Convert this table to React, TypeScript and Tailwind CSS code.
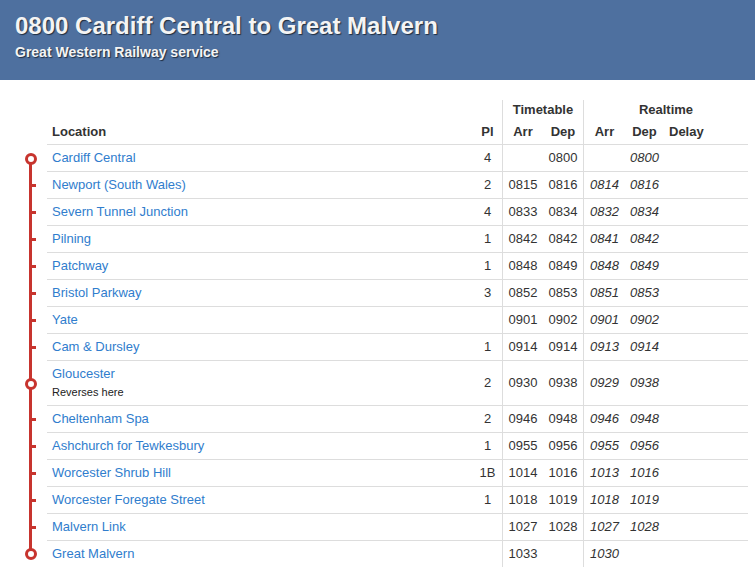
import React from 'react';

type Stop = {
  name: string;
  pl?: string;
  ttArr?: string;
  ttDep?: string;
  rtArr?: string;
  rtDep?: string;
  note?: string;
  major?: boolean;
};

const stops: Stop[] = [
  { name: 'Cardiff Central', pl: '4', ttDep: '0800', rtDep: '0800', major: true },
  { name: 'Newport (South Wales)', pl: '2', ttArr: '0815', ttDep: '0816', rtArr: '0814', rtDep: '0816' },
  { name: 'Severn Tunnel Junction', pl: '4', ttArr: '0833', ttDep: '0834', rtArr: '0832', rtDep: '0834' },
  { name: 'Pilning', pl: '1', ttArr: '0842', ttDep: '0842', rtArr: '0841', rtDep: '0842' },
  { name: 'Patchway', pl: '1', ttArr: '0848', ttDep: '0849', rtArr: '0848', rtDep: '0849' },
  { name: 'Bristol Parkway', pl: '3', ttArr: '0852', ttDep: '0853', rtArr: '0851', rtDep: '0853' },
  { name: 'Yate', ttArr: '0901', ttDep: '0902', rtArr: '0901', rtDep: '0902' },
  { name: 'Cam & Dursley', pl: '1', ttArr: '0914', ttDep: '0914', rtArr: '0913', rtDep: '0914' },
  { name: 'Gloucester', pl: '2', ttArr: '0930', ttDep: '0938', rtArr: '0929', rtDep: '0938', note: 'Reverses here', major: true },
  { name: 'Cheltenham Spa', pl: '2', ttArr: '0946', ttDep: '0948', rtArr: '0946', rtDep: '0948' },
  { name: 'Ashchurch for Tewkesbury', pl: '1', ttArr: '0955', ttDep: '0956', rtArr: '0955', rtDep: '0956' },
  { name: 'Worcester Shrub Hill', pl: '1B', ttArr: '1014', ttDep: '1016', rtArr: '1013', rtDep: '1016' },
  { name: 'Worcester Foregate Street', pl: '1', ttArr: '1018', ttDep: '1019', rtArr: '1018', rtDep: '1019' },
  { name: 'Malvern Link', ttArr: '1027', ttDep: '1028', rtArr: '1027', rtDep: '1028' },
  { name: 'Great Malvern', ttArr: '1033', rtArr: '1030', major: true },
];

const Route: React.FC<{ first: boolean; last: boolean; major?: boolean }> = ({ first, last, major }) => (
  <div className="relative w-[47px] shrink-0">
    <div
      className={`absolute left-[29px] w-[3px] bg-[#c7342e] ${first ? 'top-1/2' : 'top-0'} ${last ? 'bottom-1/2' : 'bottom-0'}`}
    />
    {major ? (
      <div className="absolute left-[24.5px] top-1/2 -mt-[6px] w-[12px] h-[12px] rounded-full border-[3px] border-[#c7342e] bg-white" />
    ) : (
      <div className="absolute left-[31px] top-1/2 -mt-[1.5px] w-[5px] h-[3px] bg-[#c7342e]" />
    )}
  </div>
);

export default function App() {
  return (
    <div className="w-[755px] min-h-[574px] bg-white font-['Liberation_Sans',Arial,sans-serif] text-[13px] text-[#333]">
      <div className="h-[80px] bg-[#4e709f] px-[15px] pt-[12px] text-[#f4f4f4] [text-shadow:1px_1px_1px_rgba(0,0,0,0.6)]">
        <h1 className="text-[24px] leading-[27px] font-bold">0800 Cardiff Central to Great Malvern</h1>
        <div className="mt-[5px] text-[14px] leading-[16px] font-bold">Great Western Railway service</div>
      </div>

      <div className="mt-[20px] w-[748px]">
        <div className="flex h-[20px] leading-[20px] font-bold">
          <div className="w-[502px] shrink-0" />
          <div className="w-[81px] shrink-0 border-l border-[#ddd] text-center">Timetable</div>
          <div className="flex-1 border-l border-[#ddd] text-center">Realtime</div>
        </div>
        <div className="flex">
          <div className="w-[47px] shrink-0" />
          <div className="flex flex-1 h-[25px] leading-[24px] font-bold border-b border-[#ddd]">
            <div className="w-[426px] shrink-0 pl-[5px]">Location</div>
            <div className="w-[29px] shrink-0 text-center">Pl</div>
            <div className="w-[41px] shrink-0 border-l border-[#ddd] text-center">Arr</div>
            <div className="w-[40px] shrink-0 text-center">Dep</div>
            <div className="w-[42px] shrink-0 border-l border-[#ddd] text-center">Arr</div>
            <div className="w-[39px] shrink-0 text-center">Dep</div>
            <div className="flex-1 pl-[5px]">Delay</div>
          </div>
        </div>

        {stops.map((s, i) => {
          const last = i === stops.length - 1;
          return (
            <div key={s.name} className="flex">
              <Route first={i === 0} last={last} major={s.major} />
              <div className={`flex flex-1 items-center ${last ? '' : 'border-b border-[#ddd]'}`}>
                <div className={`w-[426px] shrink-0 pl-[5px] ${s.note ? 'pt-[5px] pb-[3px]' : ''}`}>
                  <div className={`text-[#307dcd] ${s.note ? 'leading-[16px]' : 'leading-[26px]'}`}>{s.name}</div>
                  {s.note && <div className="text-[11px] leading-[20px] text-[#222]">{s.note}</div>}
                </div>
                <div className="w-[29px] shrink-0 self-stretch flex items-center justify-center">{s.pl}</div>
                <div className="w-[41px] shrink-0 self-stretch flex items-center justify-center border-l border-[#ddd]">{s.ttArr}</div>
                <div className="w-[40px] shrink-0 self-stretch flex items-center justify-center">{s.ttDep}</div>
                <div className="w-[42px] shrink-0 self-stretch flex items-center justify-center border-l border-[#ddd] italic">{s.rtArr}</div>
                <div className="w-[39px] shrink-0 self-stretch flex items-center justify-center italic">{s.rtDep}</div>
                <div className="flex-1" />
              </div>
            </div>
          );
        })}
      </div>
    </div>
  );
}
